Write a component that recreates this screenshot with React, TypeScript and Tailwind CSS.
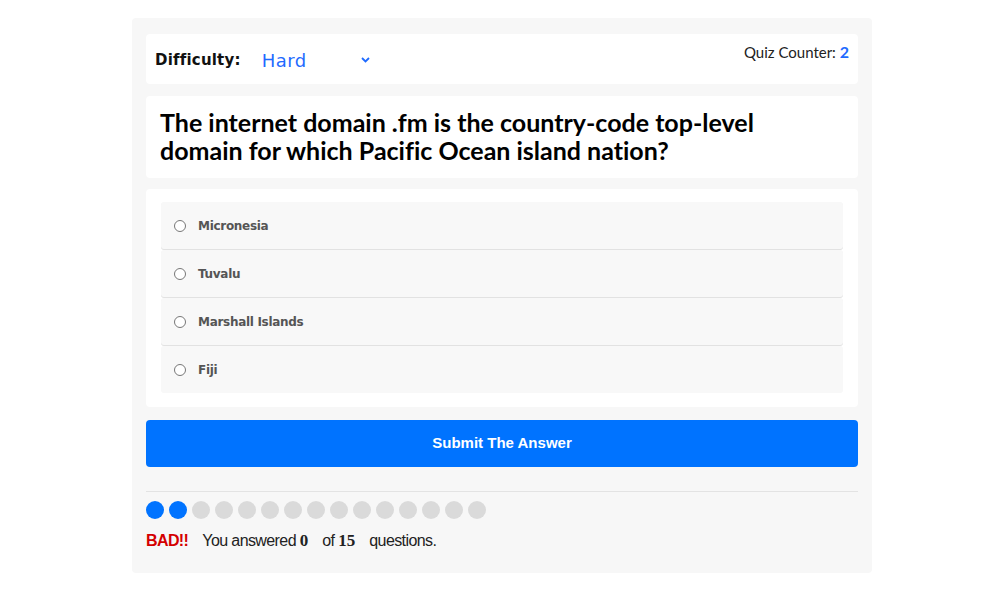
import React, { useState } from 'react';

const options = ['Micronesia', 'Tuvalu', 'Marshall Islands', 'Fiji'];

export default function App() {
  const [difficulty, setDifficulty] = useState('hard');
  const [picked, setPicked] = useState<string | null>(null);
  const total = 15;
  const done = 2;

  return (
    <div className="min-h-screen bg-white pt-[18px]">
      <div className="mx-auto w-[740px] rounded-[4px] bg-[#f7f7f7] px-[14px] pt-4 pb-[19px]">
        {/* header: difficulty + counter */}
        <div className="flex h-[50px] items-start justify-between rounded-[4px] bg-white pl-[9px] pr-[9px]">
          <div className="flex h-full items-center gap-[21px] pt-[3px]">
            <span className="font-['DejaVu_Sans',sans-serif] text-[15px] font-bold tracking-[0.2px] text-[#111]">Difficulty:</span>
            <div className="relative">
              <select
                value={difficulty}
                onChange={(e) => setDifficulty(e.target.value)}
                className="w-[112px] appearance-none bg-transparent font-['DejaVu_Sans',sans-serif] text-[18px] tracking-[0.5px] text-[#1f6bff] outline-none"
              >
                <option value="easy">Easy</option>
                <option value="medium">Medium</option>
                <option value="hard">Hard</option>
              </select>
              <svg className="pointer-events-none absolute right-[4px] top-[10px]" width="9" height="6" viewBox="0 0 9 6">
                <path d="M1 1l3.5 3.5L8 1" fill="none" stroke="#1f6bff" strokeWidth="1.8" />
              </svg>
            </div>
          </div>
          <div className="pt-[6px] font-['Lato',sans-serif] text-[15px] text-[#222]">
            Quiz Counter: <span className="text-[16px] font-bold text-[#1f6bff]">2</span>
          </div>
        </div>

        {/* question */}
        <div className="mt-3 h-[82px] rounded-[4px] bg-white px-[14px] pt-[12px]">
          <h1 className="font-['Lato',sans-serif] text-[25px] font-bold leading-[28px] text-black [font-variant-ligatures:none]">
            The internet domain .fm is the country-code top-level
            <br />
            domain for which Pacific Ocean island nation?
          </h1>
        </div>

        {/* answers */}
        <div className="mt-[11px] rounded-[4px] bg-white px-[15px] pt-[13px] pb-[14px]">
          {options.map((o, i) => (
            <label
              key={o}
              className={`flex h-[47px] cursor-pointer items-center gap-[12px] rounded-[3px] bg-[#f8f8f8] pl-[13px] ${
                i < options.length - 1 ? 'mb-[1px] shadow-[0_1px_0_#e2e2e2]' : ''
              }`}
            >
              <input
                type="radio"
                name="answer"
                checked={picked === o}
                onChange={() => setPicked(o)}
                className="h-[12px] w-[12px] appearance-none rounded-full border border-[#777] bg-white"
              />
              <span className="font-['DejaVu_Sans',sans-serif] text-[12px] font-bold tracking-[-0.3px] text-[#555]">{o}</span>
            </label>
          ))}
        </div>

        {/* submit */}
        <button className="mt-[13px] h-[47px] w-full rounded-[4px] bg-[#0073ff] font-['Liberation_Sans',Arial,sans-serif] text-[15px] font-bold text-white">
          Submit The Answer
        </button>

        <hr className="mt-6 border-t border-[#e3e3e3]" />

        {/* progress dots */}
        <div className="mt-[9px] flex gap-[5px]">
          {Array.from({ length: total }).map((_, i) => (
            <div
              key={i}
              className={`h-[18px] w-[18px] rounded-full ${i < done ? 'bg-[#0073ff]' : 'bg-[#dadada]'}`}
            />
          ))}
        </div>

        <p className="mt-[9px] flex items-baseline font-['Liberation_Sans',Arial,sans-serif] text-[16px] tracking-[-0.6px] text-[#222]">
          <span className="mr-[14px] font-bold text-[#d40000]">BAD!!</span>
          <span>You answered&nbsp;</span>
          <span className="mr-[14px] font-['Liberation_Serif',serif] text-[17px] font-bold tracking-normal">0</span>
          <span>of&nbsp;</span>
          <span className="mr-[14px] font-['Liberation_Serif',serif] text-[17px] font-bold tracking-normal">15</span>
          <span>questions.</span>
        </p>
      </div>
    </div>
  );
}
